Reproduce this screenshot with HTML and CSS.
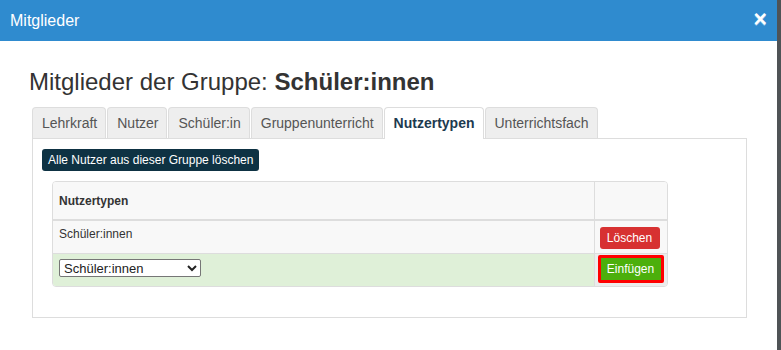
FILE: index.html
```html
<!DOCTYPE html>
<html lang="de">
<head>
  <meta charset="UTF-8" />
  <title>Mitglieder</title>
  <link rel="stylesheet" href="styles.css">
</head>
<body>
  <div class="modal">
    <!-- Modal header -->
    <div class="modal-header">
      <span class="modal-title">Mitglieder</span>
      <span class="close">&times;</span>
    </div>
    <div class="modal-body">
      <h2 class="group-title">Mitglieder der Gruppe: <b>Schüler:innen</b></h2>
      <!-- Tabs -->
      <ul class="nav-tabs">
        <li>Lehrkraft</li>
        <li>Nutzer</li>
        <li>Schüler:in</li>
        <li>Gruppenunterricht</li>
        <li class="active">Nutzertypen</li>
        <li>Unterrichtsfach</li>
      </ul>
      <div class="tab-content">
        <button class="btn btn-dark">Alle Nutzer aus dieser Gruppe löschen</button>
        <div class="table-wrap">
          <table class="members">
            <thead>
              <tr>
                <th>Nutzertypen</th>
                <th class="col-action"></th>
              </tr>
            </thead>
            <tbody>
              <tr>
                <td>Schüler:innen</td>
                <td class="col-action"><button class="btn btn-red">Löschen</button></td>
              </tr>
              <tr class="row-add">
                <td>
                  <select class="type-select">
                    <option>Schüler:innen</option>
                  </select>
                </td>
                <td class="col-action"><button class="btn btn-green">Einfügen</button></td>
              </tr>
            </tbody>
          </table>
        </div>
      </div>
    </div>
  </div>
</body>
</html>
```

FILE: styles.css
```css
/* RESET & BASE */
* {
  margin: 0;
  padding: 0;
  box-sizing: border-box;
}
body {
  font-family: "Liberation Sans", Arial, sans-serif;
  background: #4f5356;
  color: #333;
  width: 781px;
  height: 350px;
  overflow: hidden;
}
.modal {
  width: 777px;
  height: 350px;
  background: #fff;
}
/* HEADER */
.modal-header {
  height: 41px;
  background: #2f8bcf;
  color: #fff;
  display: flex;
  align-items: center;
  justify-content: space-between;
  padding: 0 10px 0 10px;
}
.modal-title {
  font-size: 16px;
}
.close {
  font-size: 23px;
  font-weight: bold;
  line-height: 1;
  margin-top: -2px;
  text-shadow: 0 1px 0 rgba(255,255,255,0.4);
}
/* BODY */
.modal-body {
  padding: 27px 30px 0 29px;
}
.group-title {
  font-size: 24px;
  font-weight: normal;
  line-height: 28px;
  margin-bottom: 11px;
}
.group-title b {
  font-weight: bold;
}
/* TABS */
.nav-tabs {
  list-style: none;
  display: flex;
  gap: 1px;
  padding-left: 3px;
  position: relative;
  z-index: 1;
}
.nav-tabs li {
  font-size: 14px;
  line-height: 20px;
  padding: 5px 8px 5px 9px;
  background: #eee;
  color: #555;
  border: 1px solid #ddd;
  border-bottom: none;
  border-radius: 4px 4px 0 0;
  height: 31px;
}
.nav-tabs li.active {
  background: #fff;
  color: #1d3a4f;
  font-weight: bold;
  height: 32px;
  margin-bottom: -1px;
}
.tab-content {
  margin-left: 3px;
  width: 715px;
  height: 180px;
  border: 1px solid #ddd;
  padding: 10px 9px 0 9px;
}
/* BUTTONS */
.btn {
  font-family: "Liberation Sans", Arial, sans-serif;
  font-size: 12px;
  color: #fff;
  border: none;
  border-radius: 3px;
  line-height: 16px;
}
.btn-dark {
  background: #0e3243;
  padding: 3px 6px;
  height: 22px;
}
.btn-red {
  background: #d73131;
  padding: 3px 7px;
  height: 22px;
  width: 60px;
}
.btn-green {
  background: #4caf0c;
  height: 28px;
  width: 66px;
  border: 3px solid #f00;
  border-radius: 2px;
  padding: 0;
}
/* TABLE */
.table-wrap {
  margin: 10px 0 0 10px;
  width: 616px;
  border: 1px solid #ddd;
  border-radius: 4px;
  overflow: hidden;
}
.members {
  width: 100%;
  border-collapse: collapse;
  font-size: 12px;
}
.members th,
.members td {
  text-align: left;
  padding: 0 6px;
  background: #f8f8f8;
  vertical-align: top;
}
.members th {
  height: 38px;
  vertical-align: middle;
  border-bottom: 2px solid #ddd;
}
.members td {
  height: 33px;
  border-top: 1px solid #ddd;
}
.members tbody tr:first-child td {
  border-top: none;
  padding-top: 6px;
}
.members .col-action {
  width: 73px;
  border-left: 1px solid #ddd;
  padding: 0 5px;
}
.members tbody tr:first-child td.col-action {
  padding-top: 6px;
}
.row-add td {
  background: #dff0d8;
  padding-top: 5px;
}
.members .row-add td.col-action {
  background: #ececec;
  padding: 1px 3px 0 3px;
}
.type-select {
  font-family: "Liberation Sans", Arial, sans-serif;
  font-size: 13px;
  width: 142px;
  height: 18px;
  color: #222;
  border: 1px solid #767676;
  border-radius: 2px;
  background: #fff;
}
```
